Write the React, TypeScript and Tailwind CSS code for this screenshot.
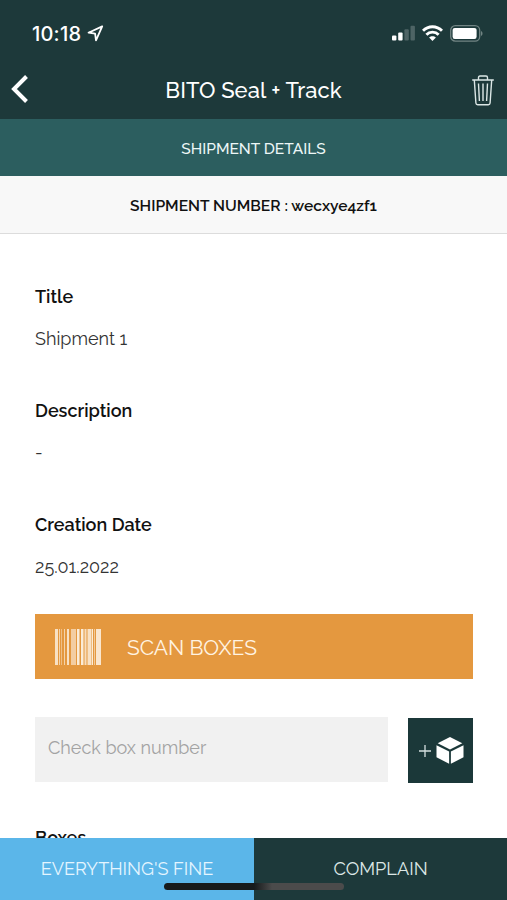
const fields = [
  { label: "Title", value: "Shipment 1" },
  { label: "Description", value: "-" },
  { label: "Creation Date", value: "25.01.2022" },
];

// x offset, width, opacity
const bars = [
  [0, 3, 0.75], [4, 1, 0.6], [6, 1, 0.4], [9, 1, 0.6], [12, 2, 0.75], [16, 5, 0.55],
  [22, 2.5, 0.85], [26, 2.5, 0.85], [29.5, 2, 0.7], [32.5, 4, 0.75], [37, 1, 0.85], [39, 1, 0.5], [41, 5, 0.8],
];

const StatusBar = () => (
  <div className="flex h-[62px] items-center justify-between pt-1 pl-8 pr-6">
    <div className="flex items-center gap-[6px]">
      <span className="pt-px font-['Inter',sans-serif] text-[20px] font-medium leading-6 tracking-[0.2px]">10:18</span>
      <svg width="17" height="17" viewBox="0 0 17 17" fill="none" stroke="currentColor" strokeWidth="1.8" strokeLinejoin="round" className="mt-px">
        <path d="M15.2 1.4 1.5 7.7l6.6.9.9 6.7Z" />
      </svg>
    </div>
    <div className="flex items-center gap-[7px]">
      <svg width="23" height="16" viewBox="0 0 23 16" fill="currentColor">
        <rect x="0" y="10.5" width="4.4" height="5" rx="1" />
        <rect x="6.2" y="7.6" width="4.4" height="7.9" rx="1" />
        <rect x="12.4" y="4.2" width="4.4" height="11.3" rx="1" opacity=".22" />
        <rect x="18.5" y="0.8" width="4.4" height="14.7" rx="1" opacity=".22" />
      </svg>
      <svg width="21" height="16" viewBox="0 0 21 16" fill="none" stroke="currentColor" strokeWidth="2.9">
        <path d="M1 5.8C6.3.3 14.7.3 20 5.8" />
        <path d="M4.4 9.7c3.3-3.4 8.9-3.4 12.2 0" />
        <path d="m10.5 16-3.4-3.4c1.9-1.8 4.9-1.8 6.8 0Z" fill="currentColor" stroke="none" />
      </svg>
      <svg width="33" height="17" viewBox="0 0 33 17" fill="none">
        <rect x=".7" y=".7" width="29" height="15.4" rx="4.6" stroke="#718483" strokeWidth="1.3" />
        <rect x="2.6" y="2.9" width="24" height="11" rx="2.2" fill="#fff" />
        <path d="M31 6v5c2-.9 2-4.1 0-5Z" fill="#718483" />
      </svg>
    </div>
  </div>
);

const TrashIcon = () => (
  <svg width="22" height="31" viewBox="0 0 22 31" fill="none" stroke="#dce7e6" strokeWidth="1.4">
    <path d="M.2 5h21.6M6.5 5V2.7Q6.5 1 8 1h6q1.5 0 1.5 1.7V5" />
    <path d="m2.3 5 1.6 23q.1 1.8 1.8 1.8h10.6q1.7 0 1.8-1.8L19.7 5" />
    <path d="m6.5 8.5.9 17.5M11 8.5V26M15.5 8.5 14.6 26" />
  </svg>
);

const Barcode = () => (
  <svg width="46" height="36" viewBox="0 0 46 36" fill="#fffaf2">
    {bars.map(([x, w, o]) => (
      <rect key={x} x={x} y="0" width={w} height="36" opacity={o} />
    ))}
  </svg>
);

const BoxIcon = () => (
  <svg width="28" height="27" viewBox="0 0 28 27" fill="#fff">
    <path d="M14 0 26.3 6.2 14 12.5 1.7 6.2Z" />
    <path d="M.5 8.2 13.1 14.6V26.7L.5 20.3Z" />
    <path d="M27.5 8.2 14.9 14.6V26.7L27.5 20.3Z" />
  </svg>
);

export default function App() {
  return (
    <div className="relative flex h-[900px] w-[507px] flex-col overflow-hidden bg-white font-['Raleway','Lato',sans-serif] text-[#111]">
      <header className="h-[119px] shrink-0 bg-[#1d393a] text-white">
        <StatusBar />
        <div className="flex h-[57px] items-center justify-between pl-[11px] pr-[13px]">
          <svg width="22" height="28" viewBox="0 0 22 28" fill="none" stroke="currentColor" strokeWidth="4" className="-mt-1">
            <path d="M15.5 1.5 3 14l12.5 12.5" />
          </svg>
          <h1 className="-mt-px pl-[2px] text-[22px] font-medium leading-7 tracking-[0.06px]">BITO Seal + Track</h1>
          <TrashIcon />
        </div>
      </header>
      <div className="flex h-[57px] shrink-0 items-center justify-center bg-[#2c5e5f] pt-[2px] text-[15.5px] font-medium text-[#edf7f7]">
        SHIPMENT DETAILS
      </div>
      <div className="flex h-[58px] shrink-0 items-center justify-center border-b border-[#dcdcdc] bg-[#f8f8f8] pt-[2px] text-[15.6px] font-semibold">
        SHIPMENT NUMBER : wecxye4zf1
      </div>

      <main className="flex min-h-0 flex-1 flex-col overflow-hidden pt-[49px] pr-[34px] pl-[35px]">
        {fields.map((f) => (
          <section key={f.label} className="h-[114px] shrink-0">
            <h2 className="text-[18px] font-semibold leading-7">{f.label}</h2>
            <p className="mt-[14px] text-[18px] leading-7 text-[#333]">{f.value}</p>
          </section>
        ))}
        <button className="-mt-[11px] flex h-[65px] shrink-0 items-center bg-[#e4983f] pl-5 text-[21px] text-[#fff3e2]">
          <Barcode />
          <span className="mt-[2px] ml-[26px] tracking-[-0.06px]">SCAN BOXES</span>
        </button>
        <div className="mt-[38px] flex shrink-0 justify-between">
          <div className="flex h-[65px] w-[353px] items-center bg-[#f1f1f1] pb-[5px] pl-[13px] text-[18px] text-[#a3a3a3]">
            Check box number
          </div>
          <button className="mt-px flex h-[65px] w-[65px] items-center gap-[5px] bg-[#1b3839] pl-[11px] text-white">
            <svg width="12" height="12" viewBox="0 0 12 12" stroke="#d5dfdf" strokeWidth="1.3" className="mt-px">
              <path d="M6 0v12M0 6h12" />
            </svg>
            <BoxIcon />
          </button>
        </div>
        <h2 className="mt-[41px] shrink-0 text-[18px] font-semibold leading-7">Boxes</h2>
      </main>

      <footer className="flex h-[62px] shrink-0 text-[18.1px]">
        <button className="w-[254px] bg-[#5bb6e9] text-[#e4f5ff]">EVERYTHING'S FINE</button>
        <button className="w-[253px] bg-[#1d393a] text-[#dce7e6]">COMPLAIN</button>
      </footer>
      <div className="absolute bottom-[10px] left-[164px] h-[7px] w-[180px] rounded-full bg-linear-to-r from-[#171b1c] from-50% to-[#4b4b4b] to-60%" />
    </div>
  );
}
